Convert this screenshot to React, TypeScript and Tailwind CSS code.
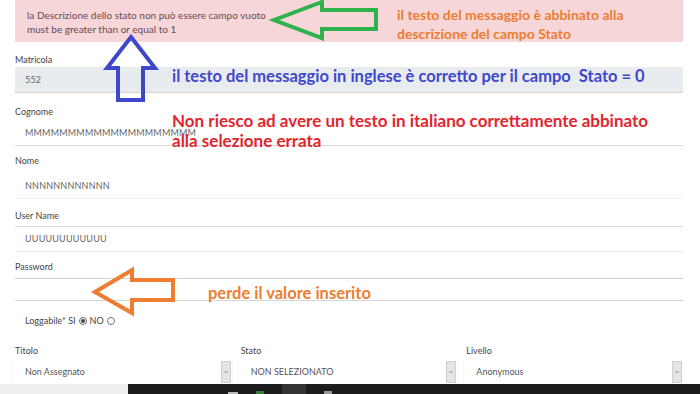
function Field({ label, value, className }: { label: string; value?: string; className: string }) {
  return (
    <div className="flex flex-col">
      <div className="h-[14px] leading-[14px] text-[9px] text-[#444]">{label}</div>
      <div className={className}>
        <span className="pl-[10px] text-[9px] text-[#666] tracking-[0.2px]">{value}</span>
      </div>
    </div>
  );
}

function Select({ label, value }: { label: string; value: string }) {
  return (
    <div className="flex flex-col">
      <div className="h-[16px] leading-[14px] pl-[2px] text-[9px] text-[#444]">{label}</div>
      <div className="h-[25px] flex items-center border-b border-[#e2e2e2] bg-white shadow-[0_1px_2px_rgba(0,0,0,0.08)]">
        <span className="flex-1 pl-[12px] text-[9px] text-[#555]">{value}</span>
        <div className="w-[10px] h-[22px] mr-[1px] bg-[#e4e4e4] border border-[#cfcfcf] flex items-center justify-center">
          <svg width="6" height="4" viewBox="0 0 6 4">
            <path d="M1 1 L3 3 L5 1" stroke="#888" strokeWidth="0.8" fill="none" />
          </svg>
        </div>
      </div>
    </div>
  );
}

export default function App() {
  const note = "absolute font-bold whitespace-nowrap";
  return (
    <div className="relative w-[700px] h-[394px] overflow-hidden bg-white" style={{ fontFamily: "Lato, 'Open Sans', sans-serif" }}>
      <div className="flex flex-col pl-[15px] pr-[17px]">
        <div className="h-[42px] bg-[#f6d6d9] pl-[12px] pt-[8px] text-[10px] leading-[14px] text-[#6a4a4e]">
          <div>la Descrizione dello stato non può essere campo vuoto</div>
          <div>must be greater than or equal to 1</div>
        </div>

        <div className="mt-[11px]">
          <Field label="Matricola" value="552" className="h-[26px] flex items-center bg-[#e9ecef] border-b border-[#d6d6d6]" />
        </div>
        <div className="mt-[12px]">
          <Field label="Cognome" value="MMMMMMMMMMMMMMMMMMMM" className="h-[26px] mt-[1px] flex items-center border-b border-[#d9d9d9]" />
        </div>
        <div className="mt-[8px]">
          <Field label="Nome" value="NNNNNNNNNNNN" className="h-[26px] mt-[5px] flex items-center border-b border-[#f0f0f0]" />
        </div>
        <div className="mt-[10px]">
          <Field label="User Name" value="UUUUUUUUUUUU" className="h-[26px] mt-[3px] flex items-center border-t border-[#dcdcdc] border-b border-b-[#ececec]" />
        </div>
        <div className="mt-[8px]">
          <Field label="Password" className="h-[23px] mt-[4px] flex items-center border-t border-[#cfcfcf] border-b border-b-[#d6d6d6]" />
        </div>

        <div className="mt-[13px] h-[14px] flex items-center pl-[10px] text-[9px] text-[#444] gap-[3px]">
          <span>Loggabile* SI</span>
          <span className="w-[8px] h-[8px] rounded-full border border-[#666] flex items-center justify-center">
            <span className="w-[4px] h-[4px] rounded-full bg-[#444]" />
          </span>
          <span>NO</span>
          <span className="w-[8px] h-[8px] rounded-full border border-[#777]" />
        </div>

        <div className="mt-[16px] -ml-[2px] grid grid-cols-3 gap-[7px]">
          <Select label="Titolo" value="Non Assegnato" />
          <Select label="Stato" value="NON SELEZIONATO" />
          <Select label="Livello" value="Anonymous" />
        </div>
      </div>

      <div className="absolute left-0 right-0 top-[384px] h-[10px] flex">
        <div className="w-[128px] bg-[#efefef]" />
        <div className="flex-1 bg-[#1c1c1c] flex items-end gap-[18px] pl-[100px]">
          <span className="w-[10px] h-[2px] bg-[#bbb]" />
          <span className="w-[8px] h-[3px] bg-[#3a7d3a]" />
          <span className="w-[24px] h-[10px] bg-[#333]" />
          <span className="w-[8px] h-[3px] bg-[#999]" />
        </div>
      </div>

      <svg className="absolute inset-0 pointer-events-none" width="700" height="394" viewBox="0 0 700 394">
        <polygon points="274,20 322,2 322,10 376,10 376,29 322,29 322,38" fill="none" stroke="#2fb24b" strokeWidth="4" />
        <polygon points="131,37 155,68 143,68 143,100 118,100 118,68 107,68" fill="none" stroke="#3f48cc" strokeWidth="4" />
        <polygon points="95,292 132,270 132,280 173,280 173,300 132,300 132,313" fill="none" stroke="#ed7d31" strokeWidth="4" />
      </svg>

      <div className={`${note} left-[397px] top-[5px] text-[14px] leading-[19px] text-[#ed7d31]`}>
        <div>il testo del messaggio è abbinato alla</div>
        <div>descrizione del campo Stato</div>
      </div>
      <div className={`${note} left-[172px] top-[65px] text-[16.5px] leading-[22px] text-[#3f48cc]`}>
        il testo del messaggio in inglese è corretto per il campo&nbsp; Stato = 0
      </div>
      <div className={`${note} left-[172px] top-[111px] text-[17px] leading-[20px] text-[#e0262f]`}>
        <div>Non riesco ad avere un testo in italiano correttamente abbinato</div>
        <div>alla selezione errata</div>
      </div>
      <div className={`${note} left-[208px] top-[282px] text-[16.5px] leading-[22px] text-[#ed7d31]`}>perde il valore inserito</div>
    </div>
  );
}
